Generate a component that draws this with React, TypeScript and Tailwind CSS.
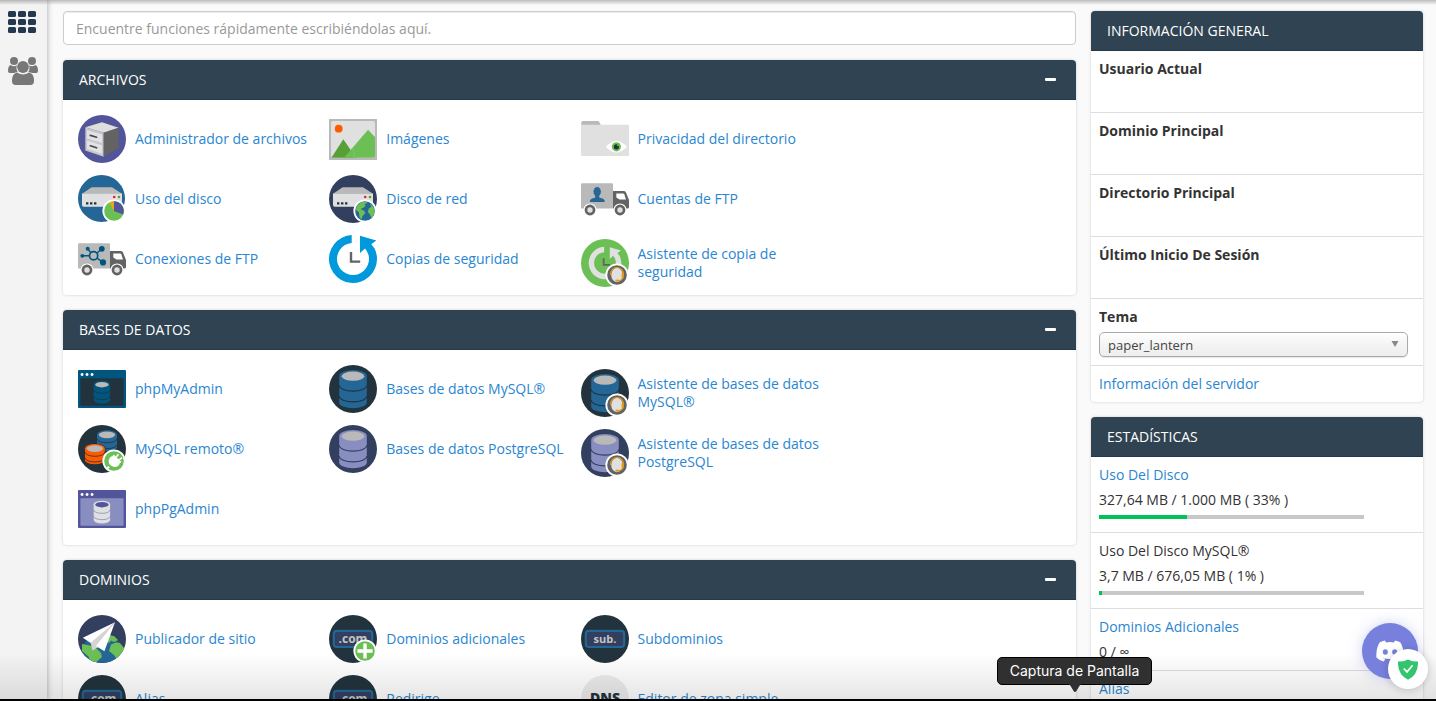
import type { ReactNode } from "react";

const GREEN = "#6cbf54";
const BLUE = "#246695";
const NAVY = "#323f5f";
const DARK = "#22333d";
const PURPLE = "#53559b";
const LILAC = "#898ec0";
const LIGHT = "#e0e0e0";
const GRAY = "#b9b9b9";
const STEEL = "#636363";

function Icon({ children }: { children: ReactNode }) {
  return (
    <svg viewBox="0 0 48 48" className="size-12 shrink-0" aria-hidden="true">
      {children}
    </svg>
  );
}

function Disc({ fill }: { fill: string }) {
  return <circle cx="24" cy="24" r="24" fill={fill} />;
}

type CylinderProps = { x: number; y: number; w: number; h: number; fill: string; top: string; line: string };

function Cylinder({ x, y, w, h, fill, top, line }: CylinderProps) {
  const rx = w / 2;
  const ry = w * 0.21;
  const arc = (yy: number) => `M${x} ${yy} A${rx} ${ry} 0 0 0 ${x + w} ${yy}`;
  const sw = w > 24 ? 1.1 : 0.8;
  return (
    <g>
      <path
        d={`M${x} ${y + ry} A${rx} ${ry} 0 0 1 ${x + w} ${y + ry} V${y + h - ry} A${rx} ${ry} 0 0 1 ${x} ${y + h - ry} Z`}
        fill={fill}
      />
      <ellipse cx={x + rx} cy={y + ry + 0.4} rx={rx * 0.82} ry={ry * 0.8} fill={top} />
      <path d={arc(y + h * 0.4)} fill="none" stroke={line} strokeWidth={sw} />
      <path d={arc(y + h * 0.68)} fill="none" stroke={line} strokeWidth={sw} />
    </g>
  );
}

function BadgeBase({ fill }: { fill: string }) {
  return (
    <g>
      <circle cx="36" cy="36" r="11.6" fill="#fff" />
      <circle cx="36" cy="36" r="9.8" fill={fill} />
    </g>
  );
}

function HeadsetBadge() {
  return (
    <g>
      <BadgeBase fill={STEEL} />
      <ellipse cx="36" cy="36" rx="5.8" ry="7.2" fill={LIGHT} />
      <path d="M29.6 36 C29 26 43 26 42.4 36 C42.6 39.5 40.5 41.8 37 41.8" fill="none" stroke="#e59a15" strokeWidth="1.2" />
      <ellipse cx="36.2" cy="41.6" rx="1.8" ry="1.2" fill="#e59a15" />
      <path d="M41.6 34.5 v4" stroke="#e59a15" strokeWidth="2" />
    </g>
  );
}

function Server() {
  return (
    <g>
      <path d="M4 18.7 L13.7 12.3 H34 L44 18.7 Z" fill={GRAY} />
      <path d="M4 18.4 H44 V30 Q44 31.7 42.3 31.7 H5.7 Q4 31.7 4 30 Z" fill={LIGHT} />
      <path d="M8 27.2 h2.4 v2.2 h-2.4z M12 27.2 h2.4 v2.2 h-2.4z M16 27.2 h2.4 v2.2 h-2.4z" fill={DARK} />
      <circle cx="36.2" cy="22" r="1.3" fill="#e3241f" />
      <circle cx="41" cy="22" r="1.3" fill="#56a036" />
    </g>
  );
}

function FileManagerIcon() {
  return (
    <Icon>
      <Disc fill={PURPLE} />
      <path d="M7.3 12.3 L24 7.3 L40.6 12.8 L25.7 17.8 Z" fill="#dedede" />
      <path d="M7.3 12.3 L25.7 17.8 V41.8 L7.3 35.4 Z" fill="#c6c6cc" />
      <path d="M25.7 17.8 L40.6 12.8 V33 L25.7 41.8 Z" fill={STEEL} />
      <path d="M9 15.2 L24 19.4 V28 L9 23.6 Z M9 25.6 L24 30.2 V38.8 L9 33.8 Z" fill="#e2e2e4" />
      <path d="M12.3 20.4 L18.6 22.2 M12.3 30.8 L18.6 32.8" stroke="#4a4a4a" strokeWidth="1.7" strokeLinecap="round" />
    </Icon>
  );
}

function ImagesIcon() {
  return (
    <Icon>
      <rect x="0" y="4" width="48" height="41" fill={GRAY} />
      <rect x="2" y="6" width="44" height="37" rx="2" fill={LIGHT} />
      <circle cx="9.7" cy="13.7" r="3.9" fill="#ff5a00" />
      <path d="M2.4 42.8 L14.3 24.3 L27 42.8 Z" fill="#56a036" />
      <path d="M15 42.8 L39 14.8 L46 22 V41 Q46 42.8 44.3 42.8 Z" fill={GREEN} />
      <path d="M21.5 34.5 L23.5 32.8 Q26.6 38 24.8 42.8" fill="none" stroke="#8bd070" strokeWidth="0.5" />
    </Icon>
  );
}

function FolderIcon() {
  return (
    <Icon>
      <path d="M0.3 12 V7.5 Q0.3 6 1.8 6 H17.5 L19.8 9.7 V12 Z" fill={GRAY} />
      <rect x="0" y="9.7" width="48" height="31.3" rx="1.2" fill={LIGHT} />
      <path d="M24.8 31.8 Q35.3 20.2 46 31.8 Q35.3 43.4 24.8 31.8 Z" fill="#fff" />
      <circle cx="35.4" cy="31.8" r="4.6" fill={GREEN} />
      <circle cx="35.4" cy="31.8" r="2.6" fill={DARK} />
      <circle cx="36.8" cy="30.3" r="0.9" fill={GREEN} />
    </Icon>
  );
}

function DiskUsageIcon() {
  return (
    <Icon>
      <circle cx="23.5" cy="23.5" r="23.5" fill={BLUE} />
      <Server />
      <BadgeBase fill={GREEN} />
      <path d="M36 36 V26.2 A9.8 9.8 0 0 1 45.2 39.4 Z" fill={PURPLE} />
      <path d="M36 36 L31.5 27.3 A9.8 9.8 0 0 1 36 26.2 Z" fill="#f0a515" />
    </Icon>
  );
}

function WebDiskIcon() {
  return (
    <Icon>
      <Disc fill={NAVY} />
      <Server />
      <BadgeBase fill={BLUE} />
      <path
        d="M27.5 31.5 Q31 26.5 37 26.4 L38.5 28 L35.5 29 L36.5 31 L34 33 L31.5 34 L35.5 36 L36 38.5 L33.5 41 L32.5 44.6 L30.5 42 L30 37.5 L27 35 Z"
        fill={GREEN}
      />
      <path d="M41 28.6 Q45.8 31.8 45.6 37 Q44.8 41 42.3 43 L41 39.5 L38.8 37 L39.8 33.5 L42.3 31.8 Z" fill={GREEN} />
    </Icon>
  );
}

function Truck({ children }: { children: ReactNode }) {
  return (
    <Icon>
      <path d="M1 8.3 H31 Q32 8.3 32 9.3 V33.6 H0 V9.3 Q0 8.3 1 8.3 Z" fill={GRAY} />
      <path d="M32 16 H43 Q44.5 16 45 17.5 L48 25 V32 Q48 33.6 46.4 33.6 H32 Z" fill={STEEL} />
      <path d="M35.3 18.6 H42 Q43 18.6 43.4 19.6 L45 24.6 H38.5 L35.3 22.4 Z" fill="#fff" />
      {[9, 39].map((cx) => (
        <g key={cx}>
          <circle cx={cx} cy="35" r="6.6" fill="#fff" />
          <circle cx={cx} cy="35" r="5.4" fill={STEEL} />
          <circle cx={cx} cy="35" r="2.7" fill={LIGHT} />
        </g>
      ))}
      {children}
    </Icon>
  );
}

function FtpAccountsIcon() {
  return (
    <Truck>
      <ellipse cx="16.2" cy="16.8" rx="3.7" ry="4.7" fill={BLUE} />
      <path d="M14.2 20 H18.2 V22.4 L22 23.8 Q23.8 24.6 23.8 27 H8.8 Q8.8 24.6 10.6 23.8 L14.2 22.4 Z" fill={BLUE} />
    </Truck>
  );
}

function FtpConnectionsIcon() {
  return (
    <Truck>
      <g stroke="#00567f" strokeWidth="1.4">
        <path d="M15.6 20.8 L9.7 14 M15.6 20.8 L23.8 14 M15.6 20.8 H4.3 M15.6 20.8 L25 27.4" />
        <circle cx="15.6" cy="20.8" r="4.1" fill={GRAY} strokeWidth="1.7" />
      </g>
      <g fill="#00567f">
        <circle cx="9.7" cy="13.8" r="2" />
        <circle cx="23.8" cy="13.8" r="2.9" />
        <circle cx="4.3" cy="20.8" r="1.9" />
        <circle cx="25" cy="27.4" r="3.1" />
      </g>
    </Truck>
  );
}

function BackupIcon() {
  return (
    <Icon>
      <path
        d="M22.7 0 A24 24 0 1 0 45.6 13.5 L42.3 9.3 L47.3 5.5 L31 0.7 V18 L36 13.4 A16 16 0 1 1 22.7 8 Z"
        fill="#0099dc"
      />
      <path d="M22 17 V26.6 H31.2" fill="none" stroke={STEEL} strokeWidth="2.4" />
    </Icon>
  );
}

function BackupWizardIcon() {
  return (
    <Icon>
      <Disc fill={GREEN} />
      <g transform="translate(7.7 7.7) scale(0.68)">
        <path
          d="M22.7 0 A24 24 0 1 0 45.6 13.5 L42.3 9.3 L47.3 5.5 L31 0.7 V18 L36 13.4 A16 16 0 1 1 22.7 8 Z"
          fill={LIGHT}
        />
        <path d="M22 17 V26.6 H31.2" fill="none" stroke={STEEL} strokeWidth="2.6" />
      </g>
      <HeadsetBadge />
    </Icon>
  );
}

type WindowProps = { frame: string; inner: string; db: string; top: string };

function DbWindowIcon({ frame, inner, db, top }: WindowProps) {
  return (
    <Icon>
      <rect x="0" y="5" width="48" height="38" rx="1" fill={frame} />
      <rect x="2.4" y="13.3" width="43.2" height="27.5" rx="1" fill={inner} />
      <path
        d="M4 8 a1.5 1.5 0 1 0 .1 0z M9 8 a1.5 1.5 0 1 0 .1 0z M14 8 a1.5 1.5 0 1 0 .1 0z"
        fill="#fff"
      />
      <Cylinder x={15.7} y={15.8} w={16.4} h={22.7} fill={db} top={top} line={inner} />
    </Icon>
  );
}

function DbIcon({ disc, fill, wizard = false }: { disc: string; fill: string; wizard?: boolean }) {
  return (
    <Icon>
      <Disc fill={disc} />
      <Cylinder x={10.2} y={5} w={27.6} h={38.3} fill={fill} top={GRAY} line={disc} />
      {wizard && <HeadsetBadge />}
    </Icon>
  );
}

function RemoteDbIcon() {
  return (
    <Icon>
      <Disc fill={DARK} />
      <Cylinder x={19} y={5.2} w={20} h={21} fill={BLUE} top={GRAY} line={DARK} />
      <Cylinder x={6.4} y={18.4} w={21} h={21.4} fill={DARK} top={DARK} line={DARK} />
      <Cylinder x={7} y={19} w={19.8} h={20.3} fill="#ff5a00" top={GRAY} line={DARK} />
      <BadgeBase fill={GREEN} />
      <path
        d="M36.6 36.4 m-5.6 5.4 L29 43.8"
        fill="none"
        stroke="#fff"
        strokeWidth="2.2"
      />
      <path d="M35.6 29.6 L43.6 37 L41.8 38.2 Q40.6 42.2 36.4 42 Q31.4 41.4 30.6 36.6 Q30.6 32.4 34.6 31 Z" fill="#fff" />
      <path d="M38.2 32 L40.4 29.2 M41.2 34.8 L44 32.6" stroke="#fff" strokeWidth="1.6" />
    </Icon>
  );
}

function SitePublisherIcon() {
  return (
    <Icon>
      <clipPath id="publisher-clip">
        <circle cx="24" cy="24" r="24" />
      </clipPath>
      <g clipPath="url(#publisher-clip)">
        <rect width="48" height="48" fill={NAVY} />
        <circle cx="24" cy="39" r="20.5" fill={BLUE} />
        <path d="M4 29 L14 31 L19 34 L23 38 L24 42 L20 45.5 L18 48 H10 L11 42 L4 36 Z" fill={GREEN} />
        <path d="M30 20 L36 21 L40 25 L36 27 L33 25.5 L31 28 L28 26 Z" fill={GREEN} />
        <path d="M33 29.5 L38 27.5 L42 28 L46 33 V41 L40 46 L36 40 L31 36 Z" fill={GREEN} />
      </g>
      <path d="M37 7.3 L4.8 22.7 L14.2 29 Z" fill="#fff" />
      <path d="M37 7.3 L12.6 27.8 L14.5 35.4 L20.5 32 Z" fill="#d4d4d4" />
      <path d="M37 7.3 L18 31 L26.4 36.2 Z" fill="#fff" />
    </Icon>
  );
}

function DomainIcon({ text, size, plus = false }: { text: string; size: number; plus?: boolean }) {
  return (
    <Icon>
      <Disc fill={DARK} />
      <rect x="4.8" y="15.8" width="38.4" height="16.2" rx="3" fill={NAVY} stroke={BLUE} strokeWidth="2.2" />
      <text
        x="24"
        y="28"
        textAnchor="middle"
        fontFamily="Open Sans, sans-serif"
        fontWeight="700"
        fontSize={size}
        fill="#c4c4c4"
      >
        {text}
      </text>
      {plus && (
        <g>
          <BadgeBase fill={GREEN} />
          <path d="M36 28.4 V43.6 M28.4 36 H43.6" stroke="#fff" strokeWidth="3.4" />
        </g>
      )}
    </Icon>
  );
}

function DnsIcon() {
  return (
    <Icon>
      <Disc fill="#ececec" />
      <text
        x="24"
        y="28"
        textAnchor="middle"
        fontFamily="Open Sans, sans-serif"
        fontWeight="800"
        fontSize="14"
        fill={DARK}
      >
        DNS
      </text>
    </Icon>
  );
}

type Item = { label: string; icon: ReactNode; twoLines?: boolean };
type Group = { title: string; items: Item[] };

const groups: Group[] = [
  {
    title: "ARCHIVOS",
    items: [
      { label: "Administrador de archivos", icon: <FileManagerIcon /> },
      { label: "Imágenes", icon: <ImagesIcon /> },
      { label: "Privacidad del directorio", icon: <FolderIcon /> },
      { label: "Uso del disco", icon: <DiskUsageIcon /> },
      { label: "Disco de red", icon: <WebDiskIcon /> },
      { label: "Cuentas de FTP", icon: <FtpAccountsIcon /> },
      { label: "Conexiones de FTP", icon: <FtpConnectionsIcon /> },
      { label: "Copias de seguridad", icon: <BackupIcon /> },
      { label: "Asistente de copia de seguridad", icon: <BackupWizardIcon />, twoLines: true },
    ],
  },
  {
    title: "BASES DE DATOS",
    items: [
      { label: "phpMyAdmin", icon: <DbWindowIcon frame="#00567f" inner={DARK} db="#00567f" top={GRAY} /> },
      { label: "Bases de datos MySQL®", icon: <DbIcon disc={DARK} fill={BLUE} /> },
      { label: "Asistente de bases de datos MySQL®", icon: <DbIcon disc={DARK} fill={BLUE} wizard />, twoLines: true },
      { label: "MySQL remoto®", icon: <RemoteDbIcon /> },
      { label: "Bases de datos PostgreSQL", icon: <DbIcon disc={NAVY} fill={LILAC} /> },
      {
        label: "Asistente de bases de datos PostgreSQL",
        icon: <DbIcon disc={NAVY} fill={LILAC} wizard />,
        twoLines: true,
      },
      { label: "phpPgAdmin", icon: <DbWindowIcon frame={PURPLE} inner={LILAC} db={LIGHT} top={PURPLE} /> },
    ],
  },
  {
    title: "DOMINIOS",
    items: [
      { label: "Publicador de sitio", icon: <SitePublisherIcon /> },
      { label: "Dominios adicionales", icon: <DomainIcon text=".com" size={12} plus /> },
      { label: "Subdominios", icon: <DomainIcon text="sub." size={11} /> },
      { label: "Alias", icon: <DomainIcon text=".com" size={12} /> },
      { label: "Redirige", icon: <DomainIcon text=".com" size={12} /> },
      { label: "Editor de zona simple", icon: <DnsIcon /> },
    ],
  },
];

const info = ["Usuario Actual", "Dominio Principal", "Directorio Principal", "Último Inicio De Sesión"];

type Stat = { label: string; value?: string; link: boolean; percent?: number };

const stats: Stat[] = [
  { label: "Uso Del Disco", value: "327,64 MB / 1.000 MB ( 33% )", link: true, percent: 33 },
  { label: "Uso Del Disco MySQL®", value: "3,7 MB / 676,05 MB ( 1% )", link: false, percent: 1 },
  { label: "Dominios Adicionales", value: "0 / ∞", link: true },
  { label: "Alias", link: true },
];

const panelClass = "overflow-hidden rounded bg-white shadow-[0_0_3px_rgba(0,0,0,0.18)]";
const headClass = "flex h-10 items-center justify-between border-b border-[#25384a] bg-[#304352] px-4 text-white";

function FeaturePanel({ group }: { group: Group }) {
  return (
    <section className={panelClass}>
      <div className={headClass}>
        <h2>{group.title}</h2>
        <button type="button" aria-label={`Contraer ${group.title}`} className="flex h-6 w-5 items-center justify-center">
          <span className="h-[3px] w-[11px] rounded-[1px] bg-white" />
        </button>
      </div>
      <ul className="grid auto-rows-[60px] grid-cols-3 pt-[9px] pr-[25%] pb-[6px] pl-[6px]">
        {group.items.map((item) => (
          <li key={item.label} className={item.twoLines ? "flex items-center pt-2 pl-[9px]" : "flex items-center pl-[9px]"}>
            <a href="#" className="flex items-center gap-[9px] leading-[18px] text-[#2a86d1]">
              {item.icon}
              <span>{item.label}</span>
            </a>
          </li>
        ))}
      </ul>
    </section>
  );
}

function Rail() {
  return (
    <nav className="flex w-[47px] shrink-0 flex-col gap-[22px] bg-[#f3f3f3] px-2 pt-[11px] shadow-[0_0_6px_rgba(0,0,0,0.35)]">
      <a href="#" aria-label="Inicio" className="block">
        <svg viewBox="0 0 28 22" className="h-[22px] w-7" fill="#24394d">
          {[0, 8, 16].map((y) => [0, 10, 20].map((x) => <rect key={`${x}-${y}`} x={x} y={y} width="8" height="6" rx="1.6" />))}
        </svg>
      </a>
      <a href="#" aria-label="Administrador de usuarios" className="block">
        <svg viewBox="0 0 30 30" className="size-[30px]" fill="#777">
          <circle cx="6" cy="6" r="4" />
          <circle cx="24" cy="6" r="4" />
          <path d="M2.5 10 Q6 12.5 9 10.2 Q7.6 14 9.8 17 Q7 17.5 6 18 H1.8 Q0 18 0 16 Q0 11 2.5 10 Z" />
          <path d="M27.5 10 Q24 12.5 21 10.2 Q22.4 14 20.2 17 Q23 17.5 24 18 H28.2 Q30 18 30 16 Q30 11 27.5 10 Z" />
          <circle cx="15" cy="12" r="5.9" />
          <path d="M9 17.6 Q15 21.4 21 17.6 Q26 18.6 26 26 Q26 30 22.4 30 H7.6 Q4 30 4 26 Q4 18.6 9 17.6 Z" />
        </svg>
      </a>
    </nav>
  );
}

function InfoPanel() {
  return (
    <section className={panelClass}>
      <div className={headClass}>
        <h2>INFORMACIÓN GENERAL</h2>
      </div>
      {info.map((label) => (
        <div key={label} className="h-[62px] border-b border-[#ddd] px-2 pt-2 font-bold text-[#333]">
          {label}
        </div>
      ))}
      <div className="border-b border-[#ddd] py-2 pr-[15px] pl-2">
        <label htmlFor="theme" className="block font-bold text-[#333]">
          Tema
        </label>
        <div className="relative mt-[5px]">
          <select
            id="theme"
            className="block h-[25px] w-full appearance-none rounded-[5px] border border-[#aaa] bg-linear-to-b from-white via-[#f4f4f4] to-[#eee] px-2 text-[13px] text-[#444] shadow-[0_1px_1px_rgba(0,0,0,0.1)]"
          >
            <option>paper_lantern</option>
          </select>
          <svg viewBox="0 0 8 6" className="pointer-events-none absolute top-[9px] right-[9px] h-[6px] w-2" fill="#888">
            <path d="M0.5 0 H7.5 L4 6 Z" />
          </svg>
        </div>
      </div>
      <div className="px-2 py-2">
        <a href="#" className="text-[#2a86d1]">
          Información del servidor
        </a>
      </div>
    </section>
  );
}

function StatsPanel() {
  return (
    <section className={panelClass}>
      <div className={headClass}>
        <h2>ESTADÍSTICAS</h2>
      </div>
      {stats.map((stat) => (
        <div key={stat.label} className="border-b border-[#ddd] px-2 py-2 text-[#333]">
          {stat.link ? (
            <a href="#" className="block text-[#2a86d1]">
              {stat.label}
            </a>
          ) : (
            <div>{stat.label}</div>
          )}
          {stat.value && <div className="mt-[5px]">{stat.value}</div>}
          {stat.percent !== undefined && (
            <div className="mt-[5px] mb-[5px] h-1 w-[84%] bg-[#c8c8c8]">
              <div className="h-full bg-[#00c25b]" style={{ width: `${stat.percent}%` }} />
            </div>
          )}
        </div>
      ))}
    </section>
  );
}

export default function App() {
  return (
    <div className="relative flex h-screen overflow-hidden bg-[#fafafa] font-['Open_Sans',sans-serif] text-sm leading-5 antialiased">
      <Rail />
      <div className="flex min-w-0 grow items-start gap-[15px] pt-[11px] pr-[13px] pl-4">
        <main className="flex min-w-0 grow flex-col gap-[15px]">
          <input
            type="text"
            aria-label="Buscar funciones"
            placeholder="Encuentre funciones rápidamente escribiéndolas aquí."
            className="h-[34px] w-full rounded border border-[#ccc] bg-white px-3 text-[#555] shadow-[inset_0_1px_1px_rgba(0,0,0,0.075)] placeholder:text-[#999]"
          />
          {groups.map((group) => (
            <FeaturePanel key={group.title} group={group} />
          ))}
        </main>
        <aside className="flex w-[332px] shrink-0 flex-col gap-[15px]">
          <InfoPanel />
          <StatsPanel />
        </aside>
      </div>

      <div className="pointer-events-none absolute inset-x-0 top-0 h-[5px] bg-linear-to-b from-black/25 to-transparent" />
      <div className="pointer-events-none absolute inset-x-0 bottom-0 h-12 border-b-2 border-black bg-linear-to-b from-transparent to-black/10" />

      <button
        type="button"
        aria-label="Discord"
        className="absolute right-[18px] bottom-[22px] flex size-14 items-center justify-center rounded-full bg-[#7780dc] shadow-[0_0_14px_rgba(119,128,220,0.35)]"
      >
        <svg viewBox="0 0 28 22" className="h-[22px] w-7" fill="#fff">
          <path d="M9 0.6 Q6.5 1 3.8 2.3 Q-0.2 8.5 0.4 17.4 Q3.4 20.4 7.8 21.4 L9.3 18.8 Q7.6 18.3 6.6 17.4 Q14 20.4 21.4 17.4 Q20.4 18.3 18.7 18.8 L20.2 21.4 Q24.6 20.4 27.6 17.4 Q28.2 8.5 24.2 2.3 Q21.5 1 19 0.6 L18 2.4 Q14 1.8 10 2.4 Z" />
          <ellipse cx="9.3" cy="12" rx="2.5" ry="2.8" fill="#7780dc" />
          <ellipse cx="18.7" cy="12" rx="2.5" ry="2.8" fill="#7780dc" />
        </svg>
      </button>
      <button
        type="button"
        aria-label="Protección"
        className="absolute right-2 bottom-3 flex size-10 items-center justify-center rounded-full bg-white shadow-[0_1px_8px_rgba(0,0,0,0.2)]"
      >
        <svg viewBox="0 0 20 21" className="h-[21px] w-5">
          <path d="M10 0.4 Q14 2.6 20 2.6 Q20.6 15.6 10 20.8 Q-0.6 15.6 0 2.6 Q6 2.6 10 0.4 Z" fill="#33c46f" />
          <path d="M6.2 10 L9 12.9 L14.2 6.8" fill="none" stroke="#fff" strokeWidth="1.7" strokeLinecap="round" />
        </svg>
      </button>

      <div
        role="tooltip"
        className="absolute right-[284px] bottom-4 flex h-7 w-[155px] items-center justify-center rounded-[5px] border border-black bg-[#303030] font-['Inter',sans-serif] text-sm whitespace-nowrap text-white"
      >
        Captura de Pantalla
        <svg viewBox="0 0 16 9" className="absolute top-[26px] left-[69px] h-[9px] w-4">
          <path d="M1 0 Q2.5 0 3.6 2 L6.6 7 Q8 9 9.4 7 L12.4 2 Q13.5 0 15 0 Z" fill="#303030" />
        </svg>
      </div>
    </div>
  );
}
